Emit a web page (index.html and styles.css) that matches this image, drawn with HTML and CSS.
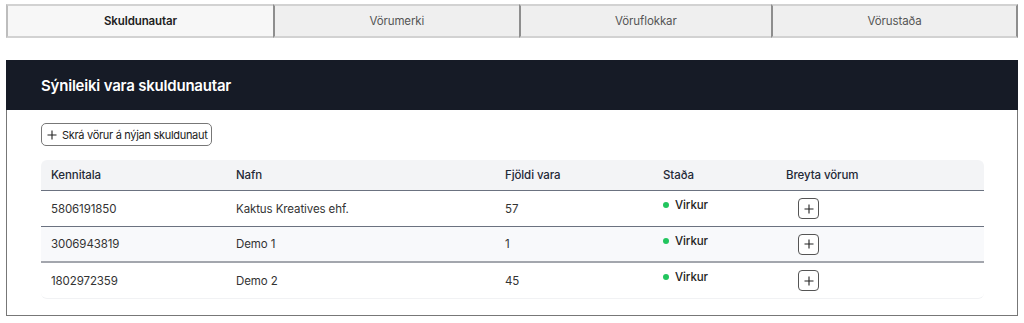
FILE: index.html
```html
<!DOCTYPE html>
<html lang="is">

<head>
    <meta charset="UTF-8">
    <meta name="viewport" content="width=device-width, initial-scale=1.0">
    <title>Skuldunautar</title>
    <link rel="stylesheet" href="styles.css">
</head>

<body>
    <!-- Tabs -->
    <div class="tabs">
        <button class="tab active">Skuldunautar</button>
        <button class="tab">Vörumerki</button>
        <button class="tab">Vöruflokkar</button>
        <button class="tab">Vörustaða</button>
    </div>

    <div class="card">
        <div class="card-header">
            <h2>Sýnileiki vara skuldunautar</h2>
        </div>
        <div class="card-body">
            <button class="add-button">
                <svg class="plus" width="10" height="10" viewBox="0 0 10 10"><path d="M5 0.5v9M0.5 5h9" stroke="#222" stroke-width="1.1" fill="none"/></svg>
                Skrá vörur á nýjan skuldunaut
            </button>

            <table class="debtors">
                <thead>
                    <tr>
                        <th class="col-id">Kennitala</th>
                        <th class="col-name">Nafn</th>
                        <th class="col-count">Fjöldi vara</th>
                        <th class="col-status">Staða</th>
                        <th class="col-edit">Breyta vörum</th>
                    </tr>
                </thead>
                <tbody>
                    <tr>
                        <td>5806191850</td>
                        <td>Kaktus Kreatives ehf.</td>
                        <td>57</td>
                        <td><span class="status"><span class="dot"></span>Virkur</span></td>
                        <td><button class="row-add"><svg width="10" height="10" viewBox="0 0 10 10"><path d="M5 0.5v9M0.5 5h9" stroke="#222" stroke-width="1.1" fill="none"/></svg></button></td>
                    </tr>
                    <tr class="striped">
                        <td>3006943819</td>
                        <td>Demo 1</td>
                        <td>1</td>
                        <td><span class="status"><span class="dot"></span>Virkur</span></td>
                        <td><button class="row-add"><svg width="10" height="10" viewBox="0 0 10 10"><path d="M5 0.5v9M0.5 5h9" stroke="#222" stroke-width="1.1" fill="none"/></svg></button></td>
                    </tr>
                    <tr class="last">
                        <td>1802972359</td>
                        <td>Demo 2</td>
                        <td>45</td>
                        <td><span class="status"><span class="dot"></span>Virkur</span></td>
                        <td><button class="row-add"><svg width="10" height="10" viewBox="0 0 10 10"><path d="M5 0.5v9M0.5 5h9" stroke="#222" stroke-width="1.1" fill="none"/></svg></button></td>
                    </tr>
                </tbody>
            </table>
        </div>
    </div>
</body>

</html>
```

FILE: styles.css
```css
body {
    margin: 0;
    padding: 4px 6px;
    background-color: #fff;
    font-family: Inter, "Noto Sans", Arial, sans-serif;
    color: #374151;
}

.tabs {
    display: flex;
    width: 1012px;
}

.tab {
    flex: 1 1 auto;
    height: 34px;
    margin: 0;
    padding: 0 10px;
    background-color: #efefef;
    border: none;
    border-top: 2px solid #d2d2d2;
    border-bottom: 2px solid #d2d2d2;
    border-left: 2px solid #8e8e8e;
    font-family: inherit;
    font-size: 11.5px;
    letter-spacing: -0.1px;
    color: #555;
}

.tab:last-child {
    border-right: 2px solid #8e8e8e;
}

.tab.active {
    flex-basis: 267px;
    flex-grow: 0;
    background-color: #f7f7f7;
    font-weight: 600;
    color: #222;
    border-left-color: #bdbdbd;
}

.card {
    margin-top: 22px;
    width: 1012px;
    box-sizing: border-box;
    border: 1px solid #777;
    border-top: none;
}

.card-header {
    height: 50px;
    background-color: #161b26;
    margin: 0 -1px;
    padding: 0 35px;
    display: flex;
    align-items: center;
}

.card-header h2 {
    margin: 0;
    font-size: 15px;
    font-weight: 600;
    letter-spacing: -0.2px;
    color: #fff;
}

.card-body {
    padding: 13px 33px 16px 34px;
}

.add-button {
    display: flex;
    align-items: center;
    gap: 5px;
    height: 23px;
    padding: 0 3px 0 5px;
    background: #fff;
    border: 1px solid #777;
    border-radius: 5px;
    font-family: inherit;
    font-size: 11px;
    letter-spacing: -0.3px;
    color: #222;
}

.debtors {
    margin-top: 14px;
    width: 943px;
    border-collapse: separate;
    border-spacing: 0;
    font-size: 11.5px;
    letter-spacing: -0.1px;
}

.debtors th {
    height: 30px;
    padding: 0 10px;
    text-align: left;
    font-weight: 500;
    color: #1f2937;
    background-color: #f3f4f6;
    border-bottom: 1px solid #6b7280;
}

.debtors th:first-child {
    border-top-left-radius: 6px;
}

.debtors th:last-child {
    border-top-right-radius: 6px;
}

.col-id { width: 165px; }
.col-name { width: 249px; }
.col-count { width: 138px; }
.col-status { width: 103px; }

.debtors td {
    height: 35px;
    padding: 0 10px;
    color: #333;
    border-bottom: 1px solid #6b7280;
}

.debtors tr.striped td {
    background-color: #f8f9fb;
    border-bottom: 2px solid #a3a6ad;
    height: 34px;
}

.debtors tr.last td {
    border-bottom: 1px solid #f1f2f4;
}

.debtors tr.last td:first-child {
    border-bottom-left-radius: 6px;
}

.debtors tr.last td:last-child {
    border-bottom-right-radius: 6px;
}

.status {
    display: inline-flex;
    align-items: center;
    gap: 6px;
    position: relative;
    top: -4px;
    color: #222;
    font-weight: 500;
}

.dot {
    width: 6px;
    height: 6px;
    border-radius: 50%;
    background-color: #22c55e;
}

.row-add {
    display: flex;
    align-items: center;
    justify-content: center;
    width: 21px;
    height: 21px;
    margin-left: 12px;
    padding: 0;
    background: #fff;
    border: 1px solid #555;
    border-radius: 4px;
}
```
